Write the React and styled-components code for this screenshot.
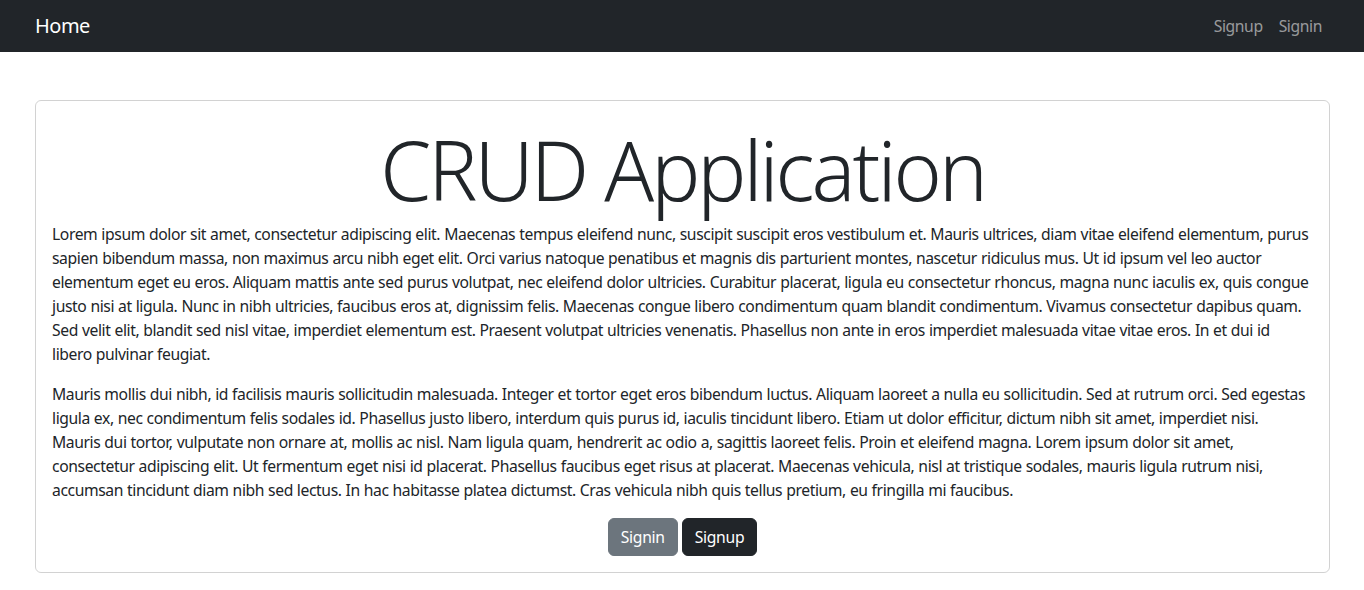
import React from "react";
import styled, { createGlobalStyle } from "styled-components";

const Global = createGlobalStyle`
  * { box-sizing: border-box; }
  body {
    margin: 0;
    font-family: "Noto Sans", "Open Sans", sans-serif;
    font-size: 16px;
    line-height: 1.5;
    color: #212529;
    background: #fff;
  }
`;

const Navbar = styled.nav`
  background: #212529;
  height: 52px;
  display: flex;
  align-items: center;
`;

const Container = styled.div`
  width: 100%;
  max-width: 1320px;
  margin: 0 auto;
  padding: 0 12px;
`;

const NavInner = styled(Container)`
  display: flex;
  align-items: center;
  justify-content: space-between;
  padding-left: 13px;
`;

const Brand = styled.a`
  color: #fff;
  font-size: 20px;
  text-decoration: none;
  line-height: 30px;
  letter-spacing: -0.5px;
`;

const NavLinks = styled.div`
  display: flex;
`;

const NavLink = styled.a`
  color: rgba(255, 255, 255, 0.55);
  text-decoration: none;
  padding: 8px 8px;
  line-height: 24px;
  font-size: 15.7px;
  letter-spacing: -0.4px;
`;

const Main = styled(Container)`
  margin-top: 48px;
  padding-left: 13px;
`;

const Card = styled.div`
  border: 1px solid rgba(0, 0, 0, 0.175);
  border-radius: 6px;
  padding: 16px;
`;

const Title = styled.div`
  font-size: 82px;
  font-weight: 300;
  line-height: 105px;
  text-align: center;
  letter-spacing: -3px;
`;

const Para = styled.p`
  margin: 0 0 16px;
  padding-right: 3px;
  font-size: 15.7px;
  line-height: 24px;
  letter-spacing: -0.4px;
  word-spacing: 0.3px;
`;

const Actions = styled.div`
  display: flex;
  justify-content: center;
  gap: 4px;
`;

const Button = styled.button`
  font-family: inherit;
  font-size: 15.7px;
  line-height: 24px;
  padding: 6px 12px;
  border-radius: 6px;
  border: 1px solid ${(p) => (p.$variant === "dark" ? "#212529" : "#6c757d")};
  background: ${(p) => (p.$variant === "dark" ? "#212529" : "#6c757d")};
  color: #fff;
  letter-spacing: -0.3px;
  cursor: pointer;
`;

export default function App() {
  return (
    <>
      <Global />
      <Navbar>
        <NavInner>
          <Brand href="#">Home</Brand>
          <NavLinks>
            <NavLink href="#">Signup</NavLink>
            <NavLink href="#">Signin</NavLink>
          </NavLinks>
        </NavInner>
      </Navbar>
      <Main>
        <Card>
          <Title>CRUD Application</Title>
          <Para>
            Lorem ipsum dolor sit amet, consectetur adipiscing elit. Maecenas tempus eleifend nunc, suscipit suscipit eros vestibulum et. Mauris ultrices, diam vitae eleifend elementum, purus sapien bibendum massa, non maximus arcu nibh eget elit. Orci varius natoque penatibus et magnis dis parturient montes, nascetur ridiculus mus. Ut id ipsum vel leo auctor elementum eget eu eros. Aliquam mattis ante sed purus volutpat, nec eleifend dolor ultricies. Curabitur placerat, ligula eu consectetur rhoncus, magna nunc iaculis ex, quis congue justo nisi at ligula. Nunc in nibh ultricies, faucibus eros at, dignissim felis. Maecenas congue libero condimentum quam blandit condimentum. Vivamus consectetur dapibus quam. Sed velit elit, blandit sed nisl vitae, imperdiet elementum est. Praesent volutpat ultricies venenatis. Phasellus non ante in eros imperdiet malesuada vitae vitae eros. In et dui id libero pulvinar feugiat.
          </Para>
          <Para>
            Mauris mollis dui nibh, id facilisis mauris sollicitudin malesuada. Integer et tortor eget eros bibendum luctus. Aliquam laoreet a nulla eu sollicitudin. Sed at rutrum orci. Sed egestas ligula ex, nec condimentum felis sodales id. Phasellus justo libero, interdum quis purus id, iaculis tincidunt libero. Etiam ut dolor efficitur, dictum nibh sit amet, imperdiet nisi. Mauris dui tortor, vulputate non ornare at, mollis ac nisl. Nam ligula quam, hendrerit ac odio a, sagittis laoreet felis. Proin et eleifend magna. Lorem ipsum dolor sit amet, consectetur adipiscing elit. Ut fermentum eget nisi id placerat. Phasellus faucibus eget risus at placerat. Maecenas vehicula, nisl at tristique sodales, mauris ligula rutrum nisi, accumsan tincidunt diam nibh sed lectus. In hac habitasse platea dictumst. Cras vehicula nibh quis tellus pretium, eu fringilla mi faucibus.
          </Para>
          <Actions>
            <Button $variant="secondary">Signin</Button>
            <Button $variant="dark">Signup</Button>
          </Actions>
        </Card>
      </Main>
    </>
  );
}
